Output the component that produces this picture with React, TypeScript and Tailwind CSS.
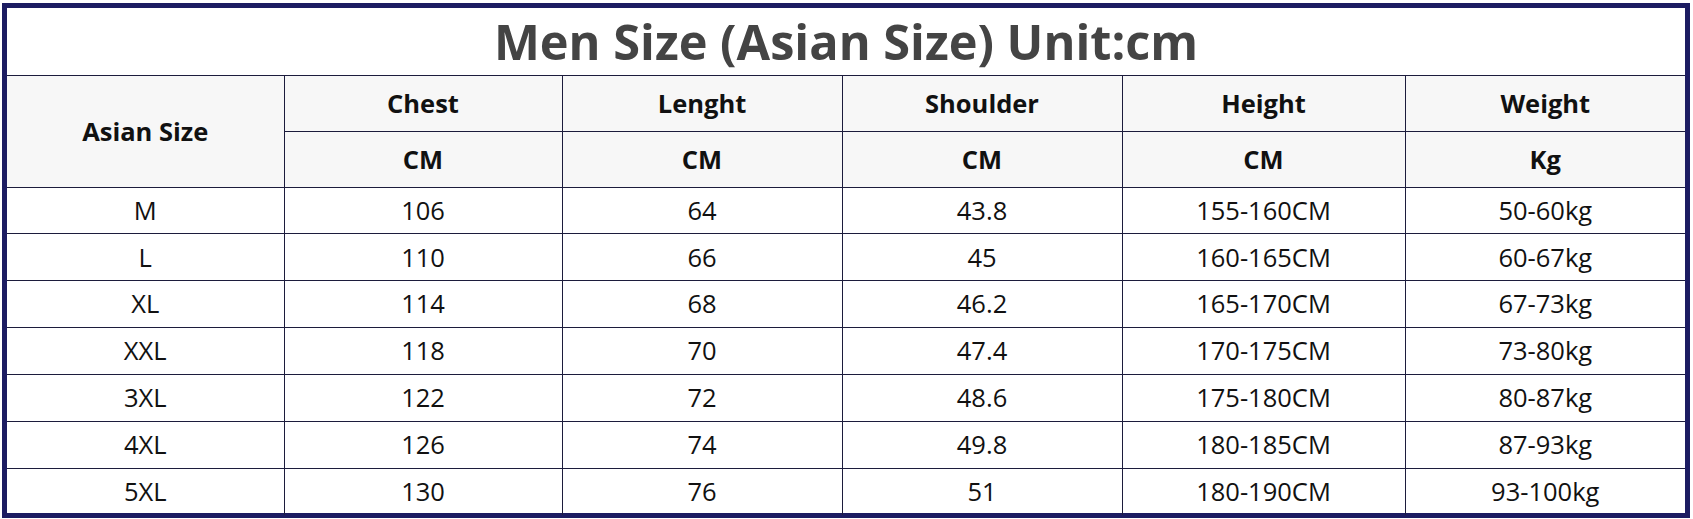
import React from "react";

const rows = [
  ["M", "106", "64", "43.8", "155-160CM", "50-60kg"],
  ["L", "110", "66", "45", "160-165CM", "60-67kg"],
  ["XL", "114", "68", "46.2", "165-170CM", "67-73kg"],
  ["XXL", "118", "70", "47.4", "170-175CM", "73-80kg"],
  ["3XL", "122", "72", "48.6", "175-180CM", "80-87kg"],
  ["4XL", "126", "74", "49.8", "180-185CM", "87-93kg"],
  ["5XL", "130", "76", "51", "180-190CM", "93-100kg"],
];

const heads = ["Chest", "Lenght", "Shoulder", "Height", "Weight"];
const units = ["CM", "CM", "CM", "CM", "Kg"];

export default function App() {
  return (
    <div className="w-[1693px] h-[519px] bg-white pt-[3px] pl-[2px]" style={{ fontFamily: '"Open Sans", sans-serif' }}>
      <div className="w-[1688px] h-[515px] border-[5px] border-[#1c1c62] bg-white">
        <table className="w-full table-fixed border-collapse">
          <colgroup>
            <col className="w-[277px]" />
            <col className="w-[278px]" />
            <col className="w-[280px]" />
            <col className="w-[280px]" />
            <col className="w-[283px]" />
            <col className="w-[280px]" />
          </colgroup>
          <thead>
            <tr className="h-[67px]">
              <th colSpan={6} className="border-b border-[#1c1c3c] text-[48.7px] font-bold text-[#444444] leading-none align-middle">
                Men Size (Asian Size) Unit:cm
              </th>
            </tr>
            <tr className="h-[56px] bg-[#f7f7f7]">
              <th rowSpan={2} className="border border-l-0 border-[#1c1c3c] text-[25.5px] font-bold text-[#111111]">
                Asian Size
              </th>
              {heads.map((h, i) => (
                <th key={h} className={`border border-[#1c1c3c] text-[25.5px] font-bold text-[#111111] ${i === 4 ? "border-r-0" : ""}`}>
                  {h}
                </th>
              ))}
            </tr>
            <tr className="h-[56px] bg-[#f7f7f7]">
              {units.map((u, i) => (
                <th key={i} className={`border border-[#1c1c3c] text-[25.5px] font-bold text-[#111111] ${i === 4 ? "border-r-0" : ""}`}>
                  {u}
                </th>
              ))}
            </tr>
          </thead>
          <tbody>
            {rows.map((r, ri) => (
              <tr key={ri} className="h-[46.9px]">
                {r.map((c, ci) => (
                  <td
                    key={ci}
                    className={`border border-[#1c1c3c] text-center text-[25.5px] text-[#111111] leading-none ${ci === 0 ? "border-l-0" : ""} ${ci === 5 ? "border-r-0" : ""} ${ri === rows.length - 1 ? "border-b-0" : ""}`}
                  >
                    {c}
                  </td>
                ))}
              </tr>
            ))}
          </tbody>
        </table>
      </div>
    </div>
  );
}
